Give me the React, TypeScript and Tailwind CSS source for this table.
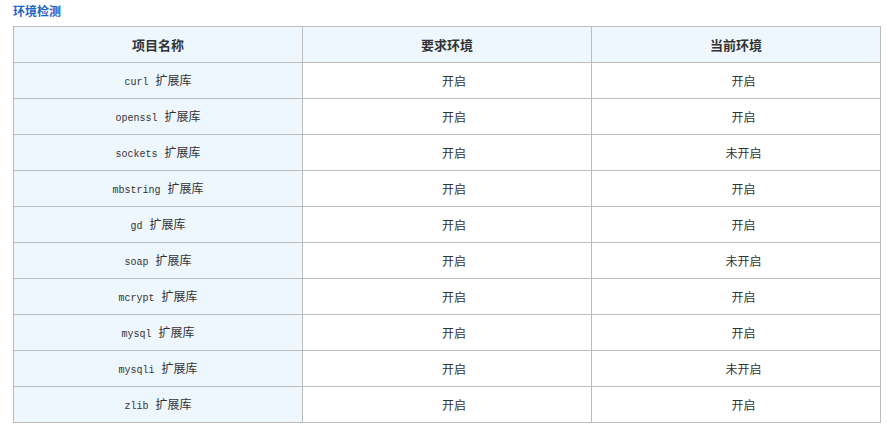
const rows: [string, string, string][] = [
	["curl", "开启", "开启"],
	["openssl", "开启", "开启"],
	["sockets", "开启", "未开启"],
	["mbstring", "开启", "开启"],
	["gd", "开启", "开启"],
	["soap", "开启", "未开启"],
	["mcrypt", "开启", "开启"],
	["mysql", "开启", "开启"],
	["mysqli", "开启", "未开启"],
	["zlib", "开启", "开启"],
];

const cjk = "font-['Noto_Sans_CJK_SC',sans-serif]";

export default function App() {
	return (
		<div className={`min-h-[444px] w-[887px] bg-white pl-[13px] text-[#333] ${cjk}`}>
			<h2 className="h-[26px] pt-[2px] text-[12px] leading-[17px] font-bold text-[#1d63c6]">环境检测</h2>
			<table className="w-[868px] table-fixed border-collapse border border-[#bcbcbc] text-[12px]">
				<thead>
					<tr className="h-[36px] bg-[#eef6fe]">
						<th className="border border-[#bcbcbc] text-[13px] font-bold">项目名称</th>
						<th className="border border-[#bcbcbc] text-[13px] font-bold">要求环境</th>
						<th className="border border-[#bcbcbc] text-[13px] font-bold">当前环境</th>
					</tr>
				</thead>
				<tbody>
					{rows.map(([name, need, now]) => (
						<tr key={name} className="h-[36px]">
							<td className="border border-[#bcbcbc] bg-[#eef6fe] text-center">
								<span className="mr-[7px] font-['Liberation_Mono',monospace] text-[10px]">{name}</span>扩展库
							</td>
							<td className="border border-[#bcbcbc] pl-[14px] text-center">{need}</td>
							<td className="border border-[#bcbcbc] pl-[15px] text-center">{now}</td>
						</tr>
					))}
				</tbody>
			</table>
		</div>
	);
}
